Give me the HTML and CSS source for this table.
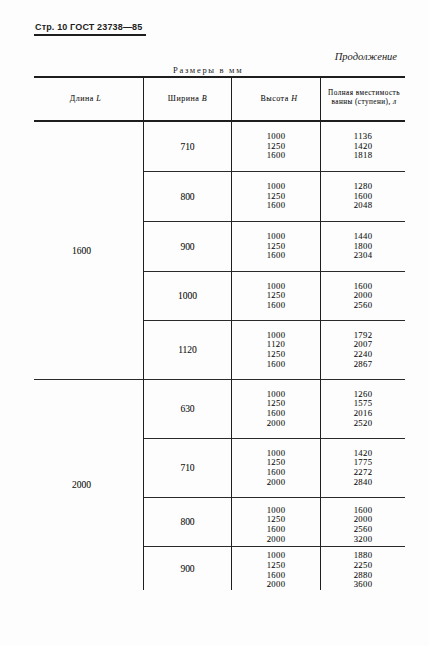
FILE: index.html
```html
<!DOCTYPE html>
<html lang="ru">
<head>
<meta charset="utf-8">
<title>ГОСТ 23738—85, стр. 10</title>
<link rel="stylesheet" href="styles.css">
</head>
<body>
<div class="page">
  <div class="running-head"><span class="head-text">Стр. 10 ГОСТ 23738—85</span></div>
  <div class="continued">Продолжение</div>
  <div class="units">Размеры в мм</div>
  <div class="table">
    <div class="cell th c1"><span>Длина <i>L</i></span></div>
    <div class="cell th c2"><span>Ширина <i>B</i></span></div>
    <div class="cell th c3"><span>Высота <i>H</i></span></div>
    <div class="cell th c4 th-small"><span>Полная вместимость<br>ванны (ступени), <i>л</i></span></div>

    <div class="cell c1 group g1"><span>1600</span></div>
    <div class="cell c2"><span>710</span></div>
    <div class="cell c3"><span>1000<br>1250<br>1600</span></div>
    <div class="cell c4"><span>1136<br>1420<br>1818</span></div>

    <div class="cell c2"><span>800</span></div>
    <div class="cell c3"><span>1000<br>1250<br>1600</span></div>
    <div class="cell c4"><span>1280<br>1600<br>2048</span></div>

    <div class="cell c2"><span>900</span></div>
    <div class="cell c3"><span>1000<br>1250<br>1600</span></div>
    <div class="cell c4"><span>1440<br>1800<br>2304</span></div>

    <div class="cell c2"><span>1000</span></div>
    <div class="cell c3"><span>1000<br>1250<br>1600</span></div>
    <div class="cell c4"><span>1600<br>2000<br>2560</span></div>

    <div class="cell c2"><span>1120</span></div>
    <div class="cell c3"><span>1000<br>1120<br>1250<br>1600</span></div>
    <div class="cell c4"><span>1792<br>2007<br>2240<br>2867</span></div>

    <div class="cell c1 group g2 last"><span>2000</span></div>
    <div class="cell c2"><span>630</span></div>
    <div class="cell c3"><span>1000<br>1250<br>1600<br>2000</span></div>
    <div class="cell c4"><span>1260<br>1575<br>2016<br>2520</span></div>

    <div class="cell c2"><span>710</span></div>
    <div class="cell c3"><span>1000<br>1250<br>1600<br>2000</span></div>
    <div class="cell c4"><span>1420<br>1775<br>2272<br>2840</span></div>

    <div class="cell c2"><span>800</span></div>
    <div class="cell c3 low"><span>1000<br>1250<br>1600<br>2000</span></div>
    <div class="cell c4 low"><span>1600<br>2000<br>2560<br>3200</span></div>

    <div class="cell c2 last"><span>900</span></div>
    <div class="cell c3 last lower"><span>1000<br>1250<br>1600<br>2000</span></div>
    <div class="cell c4 last lower"><span>1880<br>2250<br>2880<br>3600</span></div>
  </div>
</div>
</body>
</html>
```

FILE: styles.css
```css
* { box-sizing: border-box; }

html, body {
  margin: 0;
  padding: 0;
  background: #fdfdfd;
}

body {
  width: 429px;
  height: 646px;
  overflow: hidden;
  color: #1b1b1b;
  font-family: "Liberation Serif", "Times New Roman", serif;
}

.page {
  padding: 22px 0 0 34px;
}

.running-head {
  display: flex;
}

.head-text {
  display: inline-block;
  font-family: "Liberation Sans", Arial, sans-serif;
  font-weight: bold;
  font-size: 9px;
  line-height: 11px;
  letter-spacing: 0.15px;
  padding: 0 4px 1px 1px;
  border-bottom: 2px solid #1e1e1e;
  color: #1e1e1e;
}

.continued {
  width: 363px;
  margin-top: 15px;
  text-align: right;
  font-style: italic;
  font-size: 10.5px;
  line-height: 12px;
  color: #222;
}

.units {
  margin: 2px 0 0 139px;
  font-size: 8.5px;
  line-height: 10px;
  letter-spacing: 1.7px;
  color: #222;
}

.table {
  display: grid;
  width: 371px;
  margin-top: 1px;
  grid-template-columns: 110px 88px 89px 84px;
  grid-template-rows: 44px 50px 50px 50px 49px 59px 59px 59px 49px 43px;
  border-top: 2px solid #1e1e1e;
}

.cell {
  display: flex;
  align-items: center;
  justify-content: center;
  text-align: center;
  font-size: 8.7px;
  line-height: 9.65px;
  letter-spacing: 0.3px;
  color: #111;
  -webkit-text-stroke: 0.08px #111;
  border-bottom: 1px solid #2a2a2a;
}

.c1, .c2, .c3 {
  border-right: 1px solid #1e1e1e;
}

.c2, .group {
  font-size: 9.6px;
  letter-spacing: -0.1px;
}

.th {
  border-bottom-width: 2px;
  border-bottom-color: #1e1e1e;
  font-size: 8px;
  letter-spacing: 0.5px;
  line-height: 10px;
}

.th.c1 {
  padding-right: 6px;
}

.th.c3 {
  padding-left: 6px;
}

.th-small {
  font-size: 7.2px;
  letter-spacing: 0.45px;
  line-height: 9px;
  padding-left: 2px;
  padding-bottom: 2px;
}

.group {
  padding-right: 14px;
}

.g1 {
  grid-row: 2 / span 5;
}

.g2 {
  grid-row: 7 / span 4;
}

.low {
  padding-top: 6px;
}

.lower {
  padding-top: 4px;
}

.last {
  border-bottom: 0;
}
```
